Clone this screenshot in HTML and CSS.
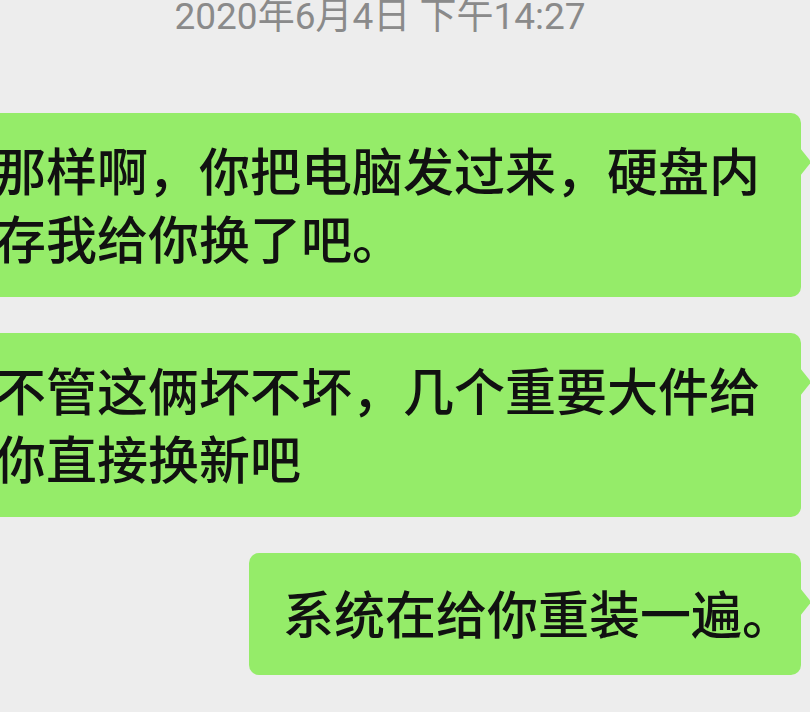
FILE: index.html
```html
<!DOCTYPE html>
<html lang="zh-CN">
<head>
    <meta charset="UTF-8">
    <meta name="viewport" content="width=device-width, initial-scale=1.0">
    <title>聊天记录</title>
    <link rel="stylesheet" href="styles.css">
</head>
<body>
    <div class="time">2020年6月4日 下午14:27</div>

    <div class="messages">
        <div class="msg">
            <div class="bubble">那样啊，你把电脑发过来，硬盘内存我给你换了吧。</div>
        </div>
        <div class="msg">
            <div class="bubble">不管这俩坏不坏，几个重要大件给你直接换新吧</div>
        </div>
        <div class="msg">
            <div class="bubble">系统在给你重装一遍。</div>
        </div>
    </div>
</body>
</html>
```

FILE: styles.css
```css
body {
    margin: 0;
    background-color: #ededed;
    font-family: "Noto Sans CJK SC", sans-serif;
    overflow: hidden;
}
.time {
    margin-top: -1px;
    padding-right: 50px;
    font-family: Roboto, "Noto Sans CJK SC", sans-serif;
    font-size: 37px;
    line-height: 36px;
    color: #8a8a8a;
    text-align: center;
}
.messages {
    display: flex;
    flex-direction: column;
    gap: 36px;
    margin: 78px 9px 0 -39px;
}
.msg {
    display: flex;
    justify-content: flex-end;
}
.bubble {
    position: relative;
    display: flex;
    align-items: center;
    max-width: 100%;
    min-height: 122px;
    box-sizing: border-box;
    padding: 22px 8px 26px 34px;
    background-color: #95ec69;
    border-radius: 10px;
    font-size: 51px;
    font-weight: 500;
    line-height: 68px;
    color: #111;
}
/* little tail on the right side */
.bubble::after {
    content: "";
    position: absolute;
    top: 35px;
    right: -9px;
    width: 10px;
    height: 28px;
    background-color: #95ec69;
    clip-path: polygon(0 0, 100% 45%, 100% 55%, 0 100%);
}
```
